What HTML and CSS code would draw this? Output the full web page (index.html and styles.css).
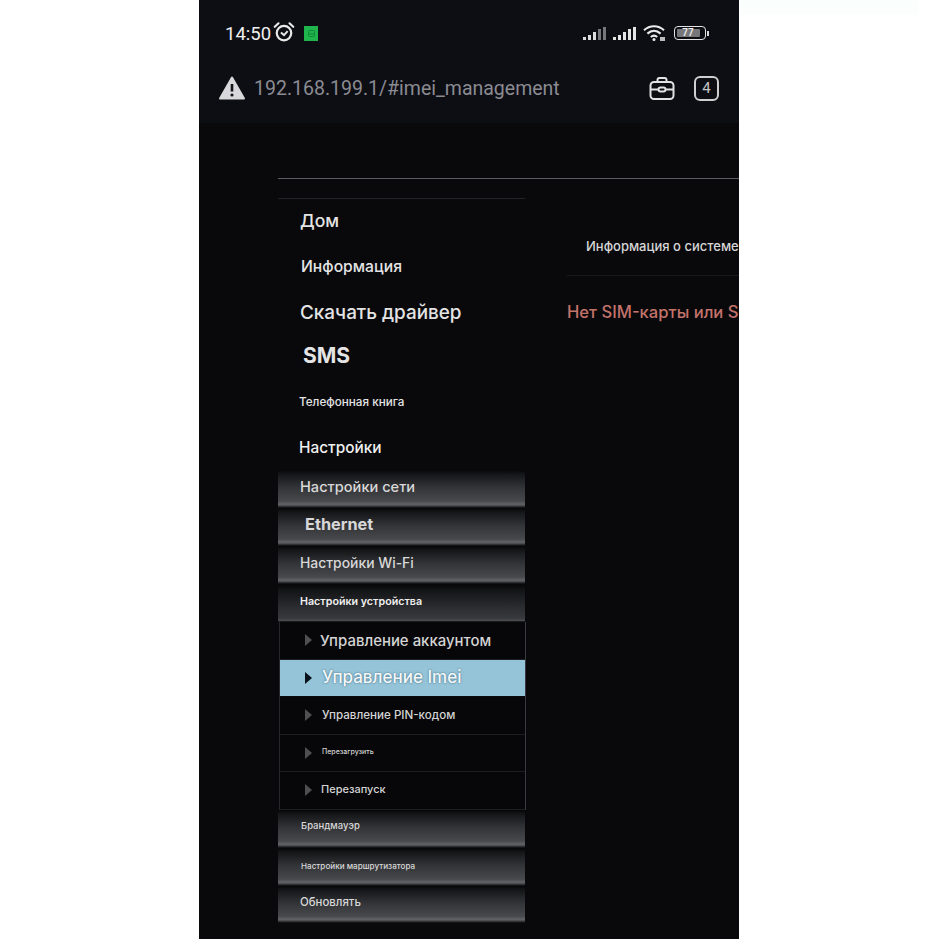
FILE: index.html
```html
<!DOCTYPE html>
<html lang="ru">
<head>
<meta charset="utf-8">
<title>192.168.199.1/#imei_management</title>
<link rel="stylesheet" href="styles.css">
</head>
<body>
<div class="phone">
  <header class="chrome">
    <div class="status">
      <div class="status-left">
        <span class="time">14:50</span>
        <svg class="alarm" width="22" height="22" viewBox="0 0 20 20" fill="none" stroke="#e8e8e8" stroke-width="2"><circle cx="10" cy="11" r="6.6"/><path d="M7.200 10.500 10 12.800 13.300 9.200" stroke-width="1.800"/><path d="M1.600 5.200 5 2.100M18.400 5.200 15 2.100" stroke-linecap="round"/></svg>
        <span class="green"><svg width="9" height="9" viewBox="0 0 9 9" fill="none" stroke="#0e8a38" stroke-width="1"><rect x="1.500" y="1.500" width="6" height="6" rx="1"/><path d="M1.500 5h6"/></svg></span>
      </div>
      <div class="status-right">
        <svg width="24" height="15" viewBox="0 0 24 15"><g fill="#dcdcdc"><rect x="0" y="11" width="3" height="3"/><rect x="5" y="9" width="3" height="5"/><rect x="10" y="6" width="3" height="8"/></g><g fill="#77777b"><rect x="15" y="3" width="3" height="11"/><rect x="20" y="1" width="3" height="13"/></g></svg>
        <svg class="sig2" width="24" height="15" viewBox="0 0 24 15" fill="#e4e4e4"><rect x="0" y="11" width="3" height="3"/><rect x="5" y="9" width="3" height="5"/><rect x="10" y="6" width="3" height="8"/><rect x="15" y="3" width="3" height="11"/><rect x="20" y="1" width="3" height="13"/></svg>
        <svg class="wifi" width="24" height="18" viewBox="0 0 24 18" fill="none" stroke="#ececec" stroke-width="2.100"><path d="M1 6.200C6.800 .9 15.200 .9 21 6.200"/><path d="M4.400 9.600C8.400 6 13.600 6 17.600 9.600"/><path d="M7.800 13C9.900 11.200 12.100 11.200 14.200 13"/><circle cx="11" cy="15.600" r="1.500" fill="#ececec" stroke="none"/><rect x="17" y="13" width="5" height="4" fill="#bcbcbc" stroke="none"/></svg>
        <span class="battery"><span class="battery-body"><span class="battery-level">77</span></span><span class="battery-tip"></span></span>
      </div>
    </div>
    <div class="urlbar">
      <svg class="warn" width="26" height="24" viewBox="0 0 26 24"><path d="M13 1.500 25 22.500H1Z" fill="#d8d8da" stroke="#d8d8da" stroke-width="2" stroke-linejoin="round"/><path d="M13 8v7.500" stroke="#14151a" stroke-width="2.600"/><circle cx="13" cy="19" r="1.600" fill="#14151a"/></svg>
      <span class="url">192.168.199.1/#imei_management</span>
      <svg class="case" width="26" height="25" viewBox="0 0 26 25" fill="none" stroke="#e2e2e4" stroke-width="2"><rect x="1.500" y="6" width="23" height="17" rx="3.500"/><path d="M8.500 6V4a2 2 0 0 1 2-2h5a2 2 0 0 1 2 2v2"/><path d="M1.500 13.500h8M16.500 13.500h8"/><rect x="9.500" y="11.500" width="7" height="4" rx="2"/></svg>
      <span class="tabs">4</span>
    </div>
  </header>
  <main class="content">
    <div class="rule"></div>
    <div class="layout">
      <nav class="sidebar">
        <a class="top t-home">Дом</a>
        <a class="top t-info">Информация</a>
        <a class="top t-driver">Скачать драйвер</a>
        <a class="top t-sms">SMS</a>
        <a class="top t-book">Телефонная книга</a>
        <a class="top t-settings">Настройки</a>
        <a class="bar b-net">Настройки сети</a>
        <a class="bar b-eth">Ethernet</a>
        <a class="bar b-wifi">Настройки Wi-Fi</a>
        <a class="bar b-dev">Настройки устройства</a>
        <ul class="submenu">
          <li class="sub s-acc">Управление аккаунтом</li>
          <li class="sub active s-imei">Управление Imei</li>
          <li class="sub s-pin">Управление PIN-кодом</li>
          <li class="sub s-reboot">Перезагрузить</li>
          <li class="sub s-restart">Перезапуск</li>
        </ul>
        <a class="bar b-fw">Брандмауэр</a>
        <a class="bar b-router">Настройки маршрутизатора</a>
        <a class="bar b-update">Обновлять</a>
      </nav>
      <section class="main">
        <h2 class="sys">Информация о системе</h2>
        <p class="nosim">Нет SIM-карты или SIM-карта недействительна</p>
      </section>
    </div>
  </main>
</div>
<div class="patch"></div>
</body>
</html>
```
FILE: styles.css
```css
* { box-sizing: border-box; }
html, body { margin: 0; height: 100%; }
body { background: #fff; display: flex; justify-content: flex-start; overflow: hidden; font-family: Inter, "Noto Sans", sans-serif; }
.phone { width: 540px; height: 939px; margin-left: 199px; background: #09090c; overflow: hidden; flex: none; }
.patch { width: 178px; height: 15px; margin-left: 2px; background: #fafefc; flex: none; }

.chrome { height: 123px; background: #0d0e14; padding: 0 20px; }
.status { height: 66px; display: flex; align-items: center; justify-content: space-between; }
.status-left { display: flex; align-items: center; margin-left: 6px; }
.time { font: 400 18.500px/1 Roboto, sans-serif; color: #f0f0f0; margin-top: 2px; }
.alarm { margin-left: 2px; margin-top: -2px; }
.green { width: 14px; height: 15px; margin-left: 9px; background: #1fb44c; display: flex; align-items: center; justify-content: center; }
.status-right { display: flex; align-items: center; margin-right: 10px; }
.sig2 { margin-left: 6px; }
.wifi { margin-left: 6px; }
.battery { display: flex; align-items: center; margin-left: 7px; }
.battery-body { width: 32px; height: 14px; border: 1.500px solid #e2e2e2; border-radius: 4px; padding: 1.500px; display: block; }
.battery-level { display: block; width: 23px; height: 8px; background: #77777a; border-radius: 1px; font: 500 10px/8px Roboto, sans-serif; color: #f0f0f0; text-align: center; }
.battery-tip { width: 2px; height: 5px; background: #d8d8d8; margin-left: 1px; }
.urlbar { display: flex; align-items: center; height: 44px; }
.warn { flex: none; }
.url { font: 400 19.500px/1 Roboto, sans-serif; color: #8b8b92; margin-left: 9px; margin-top: 2px; flex: 1; white-space: nowrap; }
.case { flex: none; }
.tabs { width: 25px; height: 25px; margin-left: 19px; border: 2px solid #cfcfd1; border-radius: 6px; color: #c4c4c6; font: 400 15px/21px Roboto, sans-serif; text-align: center; }

.content { padding: 55px 0 0 79px; }
.rule { height: 1px; background: #5c5c60; }
.layout { display: flex; margin-top: 19px; }
.sidebar { width: 247px; flex: none; border-top: 1px solid #222326; display: block; }
.sidebar a { display: flex; align-items: center; white-space: nowrap; }
.top { color: #e4e4e4; height: 46px; }
.t-home { font-size: 17.600px; font-weight: 500; padding-left: 22px; padding-bottom: 2px; height: 45px; }
.t-info { font-size: 15.700px; font-weight: 500; padding-left: 23px; height: 45px; }
.t-driver { font-size: 18.900px; font-weight: 500; padding-left: 22px; }
.t-sms { font-size: 21px; font-weight: 700; padding-left: 25px; padding-bottom: 3px; height: 44px; }
.t-book { font-size: 11.700px; font-weight: 500; padding-left: 21px; }
.t-settings { font-size: 15.400px; font-weight: 500; padding-left: 21px; color: #f0f0f0; height: 45px; }

.bar { height: 38px; padding-bottom: 4px; color: #d8d8d8; font-weight: 500; padding-left: 22px; background: linear-gradient(#060607 0, #141517 10%, #323336 45%, #48494c 82%, #626366 90%, #505155 93%, #060607 100%); }
.b-net { font-size: 14.600px; }
.b-eth { font-size: 16.300px; font-weight: 700; padding-left: 27px; padding-bottom: 6px; }
.b-wifi { font-size: 13.900px; }
.b-dev { font-size: 10.700px; font-weight: 600; color: #f0f0f0; background: linear-gradient(#060607 0, #121315 15%, #2b2c2f 60%, #38393c 90%, #4a4b4e 96%, #060607 100%); }
.b-fw { font-size: 9.500px; padding-left: 23px; padding-bottom: 6px; }
.b-router { font-size: 8.150px; padding-left: 23px; padding-bottom: 1px; }
.b-update { font-size: 11.400px; height: 37px; padding-bottom: 5px; }

.submenu { list-style: none; margin: 0 -1px 0 1px; padding: 0; border-left: 1px solid #26272a; border-right: 1px solid #3a3a3e; }
.sub { height: 37.500px; display: flex; align-items: center; padding-left: 40px; color: #d4d4d4; font-weight: 500; background: #070709; border-bottom: 1px solid #1d1e20; position: relative; white-space: nowrap; }
.sub::before { content: ""; position: absolute; left: 25px; top: 50%; margin-top: -6px; border-left: 7px solid #4f4f52; border-top: 6px solid transparent; border-bottom: 6px solid transparent; }
.active { background: #95c4d8; color: #f4f8fa; border-bottom: 1px solid #0a0a0c; text-shadow: 0 0 2px #305a70; }
.active::before { border-left-color: #07121a; }
.s-acc { font-size: 14.950px; padding-top: 1px; }
.s-imei { font-size: 17px; padding-left: 42px; padding-bottom: 1px; }
.s-pin { font-size: 11.600px; padding-left: 42px; }
.s-reboot { font-size: 7px; padding-left: 42px; padding-bottom: 2px; }
.s-restart { font-size: 11px; padding-left: 41px; padding-bottom: 2px; }

.main { flex: 1; min-width: 0; margin-left: 42px; overflow: hidden; white-space: nowrap; }
.sys { margin: 0; height: 78px; padding: 38px 0 0 19px; font-size: 13px; line-height: 20px; font-weight: 500; color: #d6d6d6; border-bottom: 1px solid #17181a; }
.nosim { margin: 26px 0 0; font-size: 16.600px; line-height: 20px; font-weight: 500; color: #c4736a; }
```
